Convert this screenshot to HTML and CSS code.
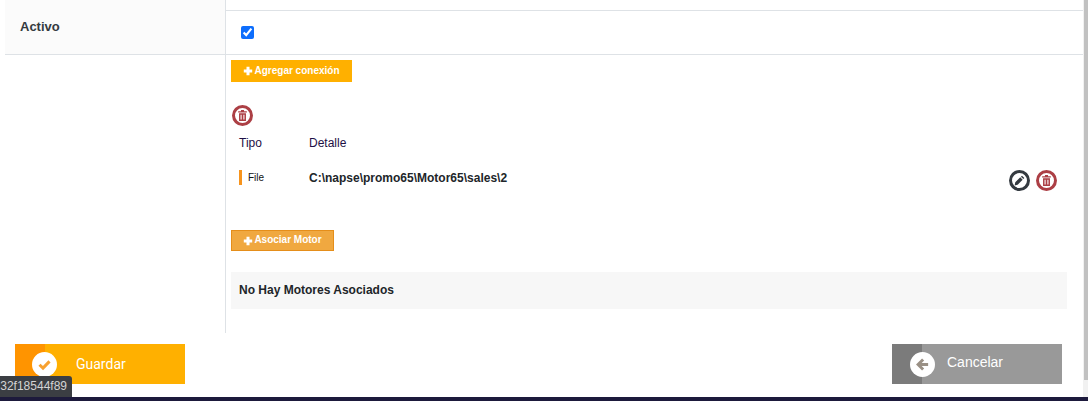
FILE: index.html
```html
<!DOCTYPE html>
<html lang="es">
<head>
<meta charset="utf-8">
<title>Conexiones</title>
<link rel="stylesheet" href="styles.css">
</head>
<body>
<div class="viewport">
  <main class="page">
    <div class="form">
      <div class="row row-top">
        <div class="label"></div>
        <div class="value"></div>
      </div>
      <div class="row row-active">
        <div class="label">Activo</div>
        <div class="value value-check"><input class="check" type="checkbox" checked></div>
      </div>
      <div class="row row-main">
        <div class="label label-empty"></div>
        <div class="value value-main">
          <button class="btn-add" type="button"><svg class="plus" viewBox="0 0 10 10"><path d="M3.500.8h3v2.700h2.700v3H6.500v2.700h-3V6.500H.8v-3h2.700z"/></svg><span class="btn-text">Agregar conexión</span></button>
          <div class="bulk">
            <span class="circle circle-del"><svg viewBox="0 0 12 12"><path d="M4.600 1h2.800v1h2.600v1.300H2V2h2.600zM2.800 4h6.400v7H2.800zM4.200 5.200v4.600h1V5.200zm2.600 0v4.600h1V5.200z"/></svg></span>
          </div>
          <div class="grid-head"><span class="col-type">Tipo</span><span>Detalle</span></div>
          <div class="grid-row">
            <span class="col-type"><span class="tag">File</span></span>
            <span class="detail">C:\napse\promo65\Motor65\sales\2</span>
            <span class="actions">
              <span class="circle circle-edit"><svg viewBox="0 0 12 12"><path d="M8.300 1.500l2.200 2.200-1 1-2.200-2.200zM6.700 3.100l2.200 2.200-4.600 4.600-2.800.6.600-2.800z"/></svg></span>
              <span class="circle circle-del"><svg viewBox="0 0 12 12"><path d="M4.600 1h2.800v1h2.600v1.300H2V2h2.600zM2.800 4h6.400v7H2.800zM4.200 5.200v4.600h1V5.200zm2.600 0v4.600h1V5.200z"/></svg></span>
            </span>
          </div>
          <button class="btn-assoc" type="button"><svg class="plus" viewBox="0 0 10 10"><path d="M3.500.8h3v2.700h2.700v3H6.500v2.700h-3V6.500H.8v-3h2.700z"/></svg><span class="btn-text">Asociar Motor</span></button>
          <div class="empty">No Hay Motores Asociados</div>
        </div>
      </div>
    </div>
    <div class="footer">
      <button class="action action-save" type="button">
        <span class="action-side"><span class="action-icon"><svg viewBox="0 0 12 12"><path class="tick" d="M2 6.200l2.800 2.700L10 3.500"/></svg></span></span>
        <span class="action-text">Guardar</span>
      </button>
      <button class="action action-cancel" type="button">
        <span class="action-side"><span class="action-icon"><svg viewBox="0 0 12 12"><path class="arrow" d="M10.500 6H3M6.500 2L2.500 6l4 4"/></svg></span></span>
        <span class="action-text">Cancelar</span>
      </button>
    </div>
    <div class="tip">32f18544f89</div>
  </main>
  <div class="scrollbar"><div class="thumb"></div></div>
</div>
<div class="bottom"></div>
</body>
</html>
```
FILE: styles.css
```css
* { box-sizing: border-box; }
html, body { margin: 0; padding: 0; height: 401px; overflow: hidden; background: #fff; }
body { font-family: "Liberation Sans", Arial, sans-serif; color: #212529; display: flex; flex-direction: column; }
.viewport { height: 397px; display: flex; }
.page { position: relative; flex: 1; padding-left: 5px; min-width: 0; }
.scrollbar { width: 5px; background: #f1f1f1; }
.thumb { margin-left: 1px; height: 380px; background: #c1c1c1; }
.bottom { height: 4px; background: #1d1a3c; }

.form { height: 333px; display: flex; flex-direction: column; }
.row { display: flex; border-bottom: 1px solid #dee2e6; }
.row-top { height: 11px; }
.row-active { height: 44px; }
.row-main { flex: 1; border-bottom: 0; }
.label { width: 221px; background: #fbfbfb; border-right: 1px solid #dee2e6; padding: 8px 15px; font-size: 13px; font-weight: 700; line-height: 15px; color: #343a40; }
.label-empty { background: #fff; }
.value { flex: 1; min-width: 0; }
.value-check { padding: 15px 0 0 15px; }
.check { display: block; width: 13px; height: 13px; margin: 0; accent-color: #0d6efd; }
.value-main { padding: 5px 16px 0 5px; display: flex; flex-direction: column; align-items: flex-start; }

button { font-family: inherit; border: 0; padding: 0; cursor: pointer; }
.btn-add, .btn-assoc { display: flex; align-items: center; justify-content: center; color: #fff; font-size: 10px; font-weight: 700; }
.btn-text { padding-bottom: 2px; }
.btn-add { width: 121px; height: 22px; background: #ffb000; }
.btn-assoc { width: 103px; height: 21px; margin-top: 34px; background: #f0a840; border: 1px solid #e58e1a; }
.plus { width: 10px; height: 10px; margin-right: 1px; fill: #fff; }

.bulk { margin-top: 23px; margin-left: 1px; height: 20px; display: flex; }
.circle { width: 21px; height: 21px; border-radius: 50%; border: 3px solid; display: inline-flex; align-items: center; justify-content: center; background: #fff; }
.circle svg { width: 13px; height: 13px; }
.circle-del { border-color: #ac3f45; }
.circle-del svg { fill: #ac3f45; }
.circle-edit { border-color: #343a40; }
.circle-edit svg { fill: #343a40; }

.grid-head { width: 100%; display: flex; margin-top: 11px; padding-left: 8px; font-size: 12px; line-height: 14px; color: #1d0f45; }
.col-type { width: 70px; flex: none; }
.grid-row { width: 100%; display: flex; align-items: center; margin-top: 14px; padding-left: 8px; height: 32px; }
.tag { display: inline-block; border-left: 3px solid #f7941d; padding-left: 6px; font-size: 10px; line-height: 15px; color: #111; position: relative; top: -4px; }
.detail { flex: 1; font-size: 12px; font-weight: 700; color: #212529; position: relative; top: -2px; }
.actions { display: flex; gap: 6px; padding-right: 10px; }

.empty { width: 100%; height: 37px; margin-top: 21px; padding: 0 0 2px 8px; display: flex; align-items: center; background: #f7f7f7; font-size: 12px; font-weight: 700; color: #212529; }

.footer { display: flex; justify-content: space-between; padding: 11px 21px 0 10px; }
.action { display: flex; width: 170px; height: 40px; color: #fff; font-size: 14px; text-align: left; }
.action-side { width: 30px; height: 100%; position: relative; }
.action-icon { position: absolute; left: 17px; top: 8px; width: 25px; height: 25px; border-radius: 50%; background: #fff; display: flex; align-items: center; justify-content: center; z-index: 1; }
.action-icon svg { width: 15px; height: 15px; fill: none; stroke-width: 2.400; }
.action-text { padding-left: 31px; }
.action-save { background: #ffb000; }
.action-save .action-side { background: #ff9400; }
.action-save .action-text { font-family: Roboto, "Liberation Sans", sans-serif; line-height: 40px; }
.tick { stroke: #f7a130; }
.action-cancel { background: #999; }
.action-cancel .action-side { background: #7b7b7b; }
.action-cancel .action-icon { left: 18px; }
.action-cancel .action-text { line-height: 37px; padding-left: 25px; }
.arrow { stroke: #9a9085; }

.tip { position: absolute; left: 0; top: 376px; width: 72px; height: 21px; padding-right: 5px; background: #3b3e43; border-radius: 0 3px 0 0; color: #d4d4d4; font-size: 12px; line-height: 21px; text-align: right; overflow: hidden; white-space: nowrap; z-index: 2; }
```
